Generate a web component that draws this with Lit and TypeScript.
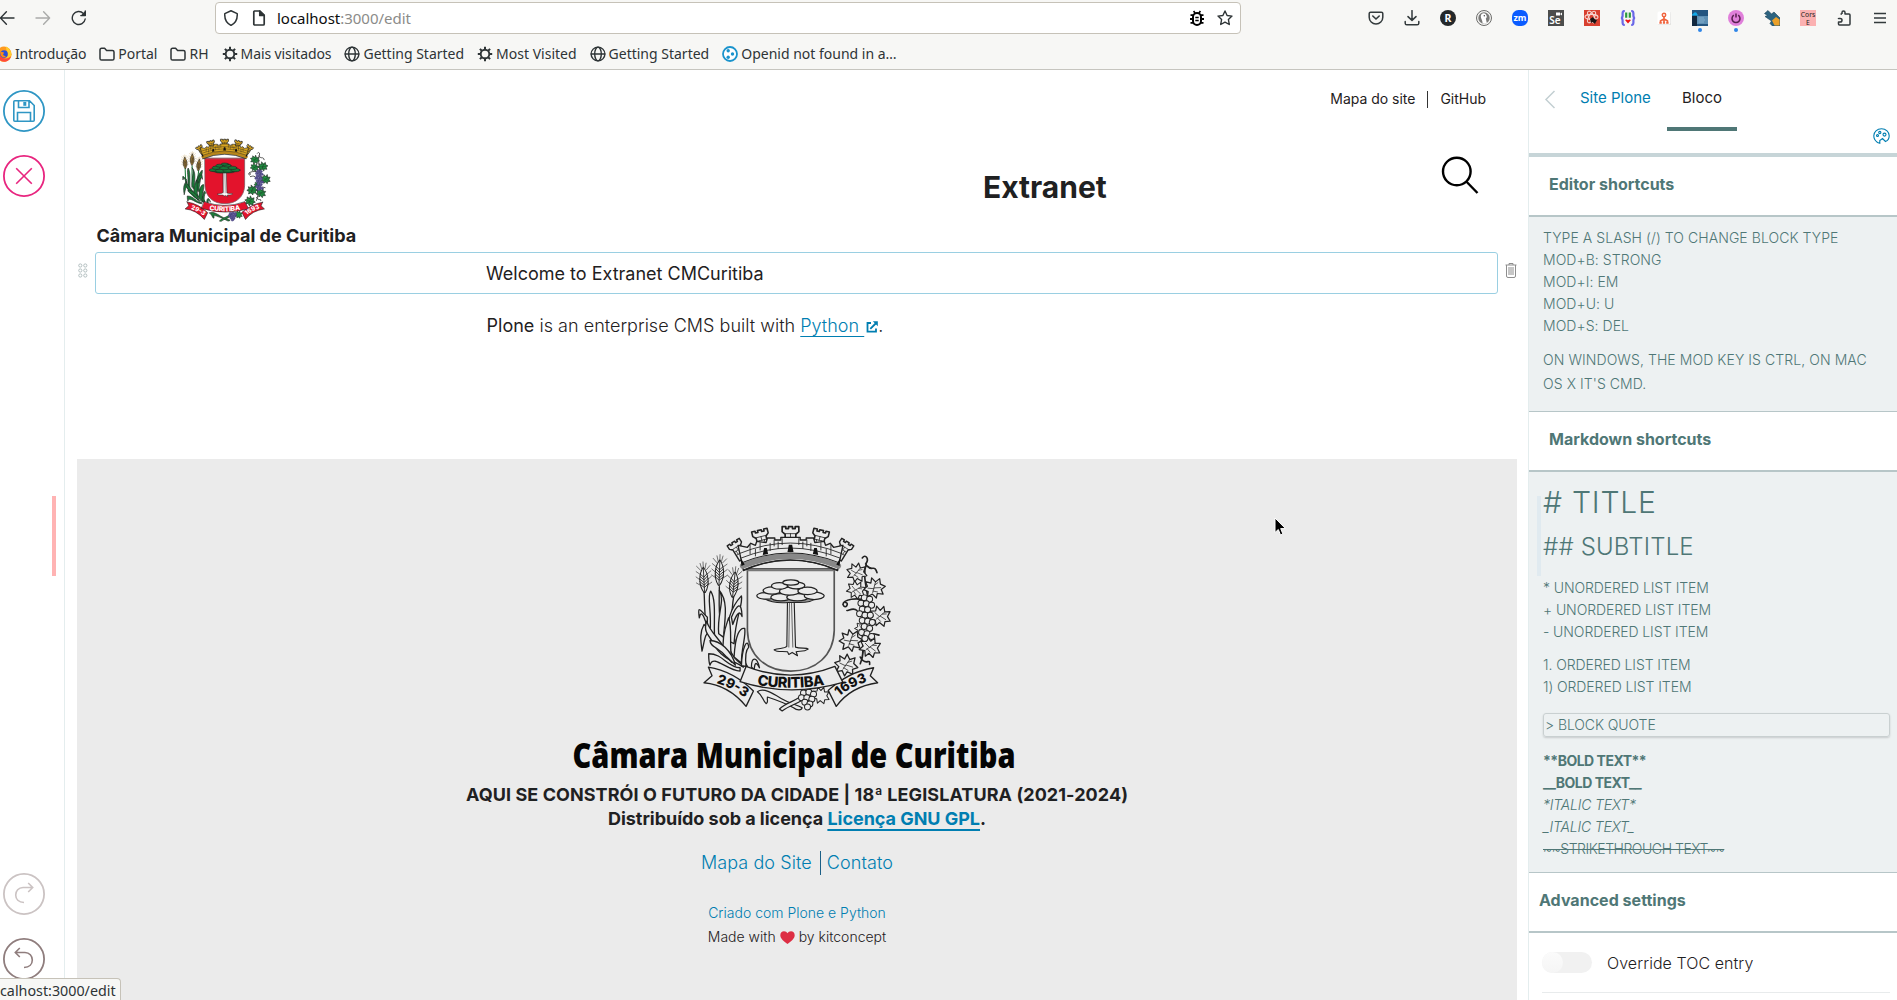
import { LitElement, html, svg, css, TemplateResult } from "lit";
import { customElement, property } from "lit/decorators.js";

type Pt = [number, number];

/* ---------- Coat of arms ---------- */

const CROWN_TOWERS: [number, number, number, number][] = [
  [228, 138, -32, 0.85],
  [302, 106, -14, 0.95],
  [391, 97, 0, 1],
  [480, 106, 14, 0.95],
  [554, 138, 32, 0.85],
];
const LEAVES: [number, number, number, number][] = [
  [590, 216, 30, 10], [642, 262, 32, -15], [588, 268, 28, 30], [660, 347, 32, 20],
  [572, 420, 34, -10], [630, 440, 32, 25], [558, 494, 34, 5], [606, 385, 22, 40],
];
const GRAPES: Pt[] = [
  [612, 292], [628, 296], [602, 308], [618, 310], [634, 314], [606, 326], [622, 328], [598, 340],
  [614, 344], [630, 344], [606, 360], [622, 362], [636, 366], [612, 378], [628, 384], [604, 396],
  [620, 400], [634, 408], [614, 414],
];
const LOW_GRAPES: Pt[] = [
  [430, 578], [446, 576], [460, 582], [424, 592], [440, 592], [455, 597], [434, 606], [449, 611], [442, 620],
];
const STALKS = [
  "M132 270C136 340 130 380 160 430S220 480 250 500",
  "M178 258C176 330 176 380 200 430S230 480 252 498",
  "M222 280C212 340 214 400 232 440S250 480 262 498",
];
const BLADES = [
  "M142 350C120 330 112 310 118 352C124 320 136 360 142 380Z",
  "M150 400C156 330 140 290 152 272C170 300 160 360 164 420Z",
  "M176 400C170 340 196 300 178 270C204 300 196 350 190 410Z",
  "M132 372C116 400 124 430 126 452C134 420 134 400 150 390Z",
  "M204 420C196 370 212 320 244 286C250 310 226 350 222 430Z",
  "M214 350C232 310 244 300 246 348C238 322 226 350 218 372Z",
  "M170 440C140 400 130 390 140 362C150 400 190 420 206 470Z",
  "M222 470C226 400 240 380 254 384C258 410 244 440 244 488Z",
  "M190 460C184 400 200 370 206 352C218 390 206 430 216 486Z",
  "M244 496C246 440 262 410 266 440C256 450 256 480 258 498Z",
  "M240 502C200 500 190 460 146 460C146 480 148 490 150 494C160 460 200 510 240 512Z",
  "M274 500C274 470 290 466 298 502C286 480 284 490 282 508Z",
  "M200 470C176 440 150 440 150 420C180 420 214 450 226 494Z",
];
const CANOPY: [number, number, number, number][] = [
  [318, 286, 28, 10], [362, 290, 30, 11], [412, 290, 32, 11], [462, 286, 30, 11],
  [336, 270, 27, 11], [388, 272, 30, 12], [442, 271, 29, 11], [358, 256, 24, 10],
  [408, 255, 26, 10], [392, 246, 24, 8],
];
const LEAF = "M0 -30L8 -16L22 -22L20 -6L32 4L18 10L20 24L4 18L-2 30L-10 16L-26 20L-20 6L-32 -4L-18 -10L-20 -24L-6 -16Z";

function crest(color: boolean, ids: string) {
  const paper = color ? "#ffffff" : "#ebebeb";
  const ink = "#222222";
  const c = {
    crown: color ? "#d9a520" : paper,
    red: color ? "#e3132c" : paper,
    leaf: color ? "#1e9140" : paper,
    blade: color ? "#1c7a3a" : paper,
    wheat: color ? "#b98d3c" : paper,
    grape: color ? "#5f5897" : paper,
    text: color ? "#ffffff" : "#111111",
  };
  const grape = ([x, y]: Pt) => svg`<circle cx=${x} cy=${y} r="9" fill=${c.grape} stroke=${color ? "#443d78" : ink} stroke-width="3"/>`;
  const ear = (x: number, y: number, lean: number) => svg`<g transform="translate(${x} ${y}) rotate(${lean})">
    <path d="M-9 -34L-20 -46M-9 -20L-22 -30M-11 -4L-23 -14M-11 12L-23 4M9 -34L20 -46M9 -20L22 -30M11 -4L23 -14M11 12L23 4M0 -40V-58M-5 -38L-9 -54M5 -38L9 -54" fill="none" stroke=${color ? c.wheat : ink} stroke-width="1.8"/>
    <path d="M0 -42C14 -24 18 10 2 34H-2C-18 10 -14 -24 0 -42Z" fill=${c.wheat} stroke=${ink} stroke-width="3"/>
    <path d="M-10 -22L0 -12L10 -22M-13 -8L0 4L13 -8M-13 8L0 19L13 8M0 -40V34M-11 -15L0 -4L11 -15M-13 0L0 12L13 0" fill="none" stroke=${ink} stroke-width="2.6"/>
  </g>`;
  const banner = color ? "#e3132c" : paper;
  return svg`<g stroke-linejoin="round" stroke-linecap="round">
    ${STALKS.map((d) => svg`<path d=${d} fill="none" stroke=${color ? c.blade : ink} stroke-width=${color ? 7 : 4}/>`)}
    ${BLADES.map((d) => svg`<path d=${d} fill=${c.blade} stroke=${ink} stroke-width="4"/>`)}
    ${ear(132, 242, -3)}${ear(178, 220, 2)}${ear(221, 256, 6)}
    <path d="M618 190C600 240 640 300 616 350S622 440 600 490M606 172C616 158 628 176 616 190M620 196C636 214 642 190 650 216M618 300C590 290 550 296 548 312C556 330 568 306 556 306M590 330C580 320 566 330 560 330M640 400L656 404M600 470C616 500 630 470 628 492" fill="none" stroke=${ink} stroke-width="5"/>
    ${LEAVES.map(([x, y, s, r]) => svg`<g transform="translate(${x} ${y}) rotate(${r}) scale(${s / 31})">
      <path d=${LEAF} fill=${c.leaf} stroke=${ink} stroke-width="3.6"/>
      <path d="M-8 12L8 -16M0 0L18 4M-2 2L-18 -4M4 -8L14 -12M-6 8L6 14" fill="none" stroke=${ink} stroke-width="2"/></g>`)}
    ${GRAPES.map(grape)}
    <path d="M292 574C310 560 340 580 366 596S410 612 426 622C424 632 410 630 400 622C370 606 340 596 322 590C320 600 326 606 318 610C306 598 310 588 292 574Z" fill=${c.blade} stroke=${ink} stroke-width="3.6"/>
    <path d="M358 626C380 604 410 604 430 580L440 588C420 610 392 612 366 632Z" fill=${c.leaf} stroke=${ink} stroke-width="3.6"/>
    <g transform="translate(482 585) rotate(20) scale(.85)"><path d=${LEAF} fill=${c.leaf} stroke=${ink} stroke-width="3.6"/></g>
    ${LOW_GRAPES.map(grape)}
    <path d="M262 205H522V390C520 466 466 512 392 512S264 466 262 390Z" fill=${c.red} stroke=${color ? "#7a5a60" : "#555"} stroke-width="5"/>
    <path d="M262 210H522" stroke=${color ? "#888" : "#777"} stroke-width="4"/>
    <path d="M382 300H402L406 440C420 446 440 440 444 446C430 456 416 450 408 454L412 466L396 456L386 462L382 454C366 452 350 456 342 448C356 442 372 446 380 438Z" fill=${paper} stroke=${ink} stroke-width="3.4"/>
    <path d="M388 304L386 440M394 304L398 440" stroke=${ink} stroke-width="2"/>
    <path d="M312 294Q340 310 384 306H410Q450 308 470 292Z" fill=${color ? "#0e5d2a" : "#999"} stroke=${ink} stroke-width="3"/>
    ${CANOPY.map(([x, y, rx, ry]) => svg`<ellipse cx=${x} cy=${y} rx=${rx} ry=${ry} fill=${color ? "#167a38" : paper} stroke=${ink} stroke-width="3.8"/>`)}
    ${CROWN_TOWERS.map(([x, y, r, s]) => svg`<g transform="translate(${x} ${y}) rotate(${r}) scale(${s})">
      <path d="M-25 -19H-14V-13H-6V-19H6V-13H14V-19H25V-4L16 4V50H-16V4L-25 -4Z" fill=${c.crown} stroke=${ink} stroke-width="5"/>
      <path d="M-18 2H18M-15 14H15M-15 27H15M0 2V14M-8 14V27M8 14V27" stroke=${ink} stroke-width="2.4"/></g>`)}
    <path d="M234 134L262 140L272 128L286 134L290 122L318 126L322 112H344V118H362V110H420V118H438V112H460L464 126L492 122L496 134L510 128L520 140L548 134L532 210Q390 146 250 210Z" fill=${c.crown} stroke=${ink} stroke-width="4"/>
    <path d="M240 158Q390 96 542 158M244 172Q390 112 538 172M270 134V160M300 126V148M342 118V136M366 114V132M416 114V132M440 118V136M482 126V148M512 134V160M286 146V166M330 128V150M354 124V144M428 124V144M452 128V150M498 146V166" fill="none" stroke=${ink} stroke-width="2.6"/>
    <path d="M248 196Q390 138 534 196" fill="none" stroke=${color ? "#b8861a" : "#888"} stroke-width="17"/>
    <path d="M246 186Q390 128 536 186M250 208Q390 150 532 208" fill="none" stroke=${ink} stroke-width="3"/>
    <path d="M308 163L312 142H320L324 160ZM382 154L386 132H396L400 154ZM458 160L462 142H470L474 163ZM244 196L242 172L254 192ZM538 196L540 172L528 192Z" fill="#111"/>
    <path d="M145 500L156 526L132 547Q206 554 258 618L280 572Q220 512 145 500Z" fill=${banner} stroke=${ink} stroke-width="4"/>
    <path d="M640 502L630 526L652 547Q572 558 528 618L504 570Q566 514 640 502Z" fill=${banner} stroke=${ink} stroke-width="4"/>
    <path d="M258 498Q390 550 524 498L548 546Q390 592 240 544Z" fill=${banner} stroke=${ink} stroke-width="4"/>
    <path id="${ids}-mid" d="M268 549Q390 575 516 549" fill="none"/>
    <path id="${ids}-left" d="M160 546Q208 556 262 598" fill="none"/>
    <path id="${ids}-right" d="M530 594Q568 558 634 540" fill="none"/>
    <g font-family="Inter, sans-serif" font-weight="800" fill=${c.text}>
      <text font-size="44" text-anchor="middle"><textPath href="#${ids}-mid" startOffset="50%" textLength="204">CURITIBA</textPath></text>
      <text font-size="40" text-anchor="middle"><textPath href="#${ids}-left" startOffset="50%">29-3</textPath></text>
      <text font-size="40" text-anchor="middle"><textPath href="#${ids}-right" startOffset="48%">1693</textPath></text>
    </g>
  </g>`;
}

/* ---------- Icons ---------- */

const stroke16 = (body: TemplateResult, cls = "i16", w = 1.4) =>
  html`<svg class=${cls} viewBox="0 0 16 16" fill="none" stroke="currentColor" stroke-width=${w} stroke-linecap="round" stroke-linejoin="round">${body}</svg>`;

const icons = {
  back: stroke16(svg`<path d="M15 8H1.6M7.4 1.8L1.4 8L7.4 14.2"/>`),
  forward: stroke16(svg`<path d="M1 8H14.4M8.6 1.8L14.6 8L8.6 14.2"/>`),
  reload: stroke16(svg`<path d="M14.200 9A6.500 6.500 0 1 1 12.400 3.400L14 5M14.300 1V5.600H9.800"/><path d="M14.200 2V5.400H10.800Z" fill="currentColor"/>`),
  shield: stroke16(svg`<path d="M8 .8L14.2 3.6C14.6 8.600 12.800 13 8 15.400C3.200 13 1.400 8.600 1.800 3.600Z"/>`, "i16", 1.5),
  doc: stroke16(svg`<path d="M3.400 1H8.800L13.200 5.400V14Q13.200 15 12.200 15H3.800Q2.800 15 2.800 14V2Q2.800 1 3.800 1Z"/><path d="M8.800 1V5.400H13.200Z" fill="currentColor"/>`, "i16", 1.7),
  bug: html`<svg class="i16" viewBox="0 0 16 16" fill="none" stroke="#000"><path d="M4.600 1L6 3M11.400 1L10 3" stroke-width="1.600"/><rect x="4" y="3" width="8" height="12" rx="4" stroke-width="2"/><path d="M1.500 5.200H4.500M1 9H4.500M1.500 12.800H4.500M11.500 5.200H14.500M11.500 9H15M11.500 12.800H14.500" stroke-width="1.800"/><path d="M6.300 7.500H9.700M6.300 10.500H9.700" stroke-width="1.500"/></svg>`,
  star: stroke16(svg`<path d="M8 1L10.100 5.500L15 6.100L11.400 9.500L12.300 14.500L8 12.100L3.700 14.500L4.600 9.500L1 6.100L5.900 5.500Z"/>`, "i16", 1.4),
  folder: stroke16(svg`<path d="M1 4Q1 2.300 2.600 2.300H5.600L7.600 4.500H13.400Q15 4.500 15 6V12.400Q15 14 13.400 14H2.600Q1 14 1 12.400Z"/>`, "i16", 1.5),
  gear: html`<svg class="i16" viewBox="0 0 16 16" fill="none" stroke="currentColor"><circle cx="8" cy="8" r="4.300" stroke-width="1.900"/><path d="M8 .8V3.500M8 12.500V15.200M.8 8H3.500M12.500 8H15.200M2.900 2.900L4.800 4.800M11.200 11.200L13.100 13.100M13.100 2.900L11.200 4.800M4.800 11.200L2.900 13.100" stroke-width="2"/></svg>`,
  globe: stroke16(svg`<circle cx="8" cy="8" r="6.900"/><ellipse cx="8" cy="8" rx="3.300" ry="6.900"/><path d="M1.200 8H14.800"/>`, "i16", 1.4),
  firefox: html`<svg class="i16" viewBox="0 0 16 16"><circle cx="8" cy="8.200" r="7.600" fill="#ff9a1f"/><path d="M10 .5C15 3 17 9 13.600 13A7.600 7.600 0 0 1 1 11C5 14 11 13.500 12 9C12.300 6 10 5 10 .5Z" fill="#ffcf2e"/><path d="M1 5C0 10 3 15.800 8 15.800C12 15.800 14.500 13 15 10C12 14 5 13 4 8Z" fill="#ff4a3d"/><circle cx="8" cy="8" r="3.800" fill="#2b4fd8"/><path d="M4.500 5.500L8 6.500L7 9L10 10.600C7 12.500 3.600 10.500 4.500 5.500Z" fill="#ff8a16"/></svg>`,
  plone: html`<svg class="i16" viewBox="0 0 16 16"><circle cx="8" cy="8" r="7" fill="#fff" stroke="#1a93cc" stroke-width="1.800"/><circle cx="6.200" cy="4.800" r="1.700" fill="#1a93cc"/><circle cx="10.500" cy="8" r="1.700" fill="#1a93cc"/><circle cx="6.200" cy="11.200" r="1.700" fill="#1a93cc"/></svg>`,
};

const extensions: { name: string; dot?: boolean; art: TemplateResult }[] = [
  { name: "pocket", art: svg`<path d="M2.600 2.200H13.400Q14.800 2.200 14.800 3.600V7.200A6.800 6.800 0 0 1 1.200 7.200V3.600Q1.200 2.200 2.600 2.200Z" fill="none" stroke="#333a3c" stroke-width="1.500"/><path d="M4.800 6L8 9L11.200 6" fill="none" stroke="#333a3c" stroke-width="1.600" stroke-linecap="round"/>` },
  { name: "downloads", art: svg`<path d="M8 .6V10.200M4 6.600L8 10.400L12 6.600M1.200 11.600V13.200Q1.200 14.800 2.800 14.800H13.200Q14.800 14.800 14.800 13.200V11.600" fill="none" stroke="#333a3c" stroke-width="1.500" stroke-linecap="round" stroke-linejoin="round"/>` },
  { name: "r", art: svg`<circle cx="8" cy="8" r="8" fill="#24282a"/><text x="8" y="11.800" font-size="10.500" font-weight="700" text-anchor="middle" fill="#fff">R</text>` },
  { name: "duck", art: svg`<circle cx="8" cy="8" r="7.500" fill="#f3f3f1" stroke="#6d6d6b" stroke-width="1"/><circle cx="8" cy="8" r="5.700" fill="#7b7b79"/><path d="M4.800 6.500C4.800 3 8.500 2.600 9.800 4.300C10.800 6 11.500 7 9.800 8.600L10.800 13C9 14 7.500 13.600 6.600 13.200C6.600 10.500 4.800 8.500 4.800 6.500Z" fill="#fff"/><circle cx="8.300" cy="5.800" r=".7" fill="#444"/>` },
  { name: "zoom", art: svg`<rect width="16" height="16" rx="6.500" fill="#0b5cff"/><text x="8" y="10.800" font-size="8.800" font-weight="700" text-anchor="middle" fill="#fff">zm</text>` },
  { name: "selenium", art: svg`<rect width="16" height="16" fill="#4c4d4c"/><text x="1.200" y="14.300" font-size="10" font-weight="600" fill="#fff">Se</text><path d="M8 2.500H12V5.500H8ZM12 4L14 2.500V5.500Z" fill="#fff"/>` },
  { name: "bee", art: svg`<rect width="16" height="16" fill="#d8402f"/><g fill="none" stroke="#f6d5cf" stroke-width="1.100"><ellipse cx="7.500" cy="7" rx="6.500" ry="2.600"/><ellipse cx="7.500" cy="7" rx="6.500" ry="2.600" transform="rotate(60 7.500 7)"/><ellipse cx="7.500" cy="7" rx="6.500" ry="2.600" transform="rotate(120 7.500 7)"/></g><path d="M6 9L9 7L10.500 9L13 10L11 14L8.500 12L7 13Z" fill="#1b1414"/>` },
  { name: "json", art: svg`<path d="M4.800 1Q2.600 1 2.600 3V5.500Q2.600 7.800 1 8Q2.600 8.200 2.600 10.500V13Q2.600 15 4.800 15M11.200 1Q13.400 1 13.400 3V5.500Q13.400 7.800 15 8Q13.400 8.200 13.400 10.500V13Q13.400 15 11.200 15" fill="none" stroke="#6a68e8" stroke-width="2.200"/><path d="M6.200 2.500V7.800M9.800 2.500V7.800" stroke="#2f9a3d" stroke-width="2.200"/><path d="M8 13.600L5 10Q6.500 8.800 8 10.200Q9.500 8.800 11 10Z" fill="#ee1414"/>` },
  { name: "tree", art: svg`<rect x="2" y="2" width="13" height="13" rx="1.500" fill="#d5d5d3"/><rect x="1.500" y="1.500" width="13" height="13" rx="1.500" fill="#fff"/><circle cx="8" cy="5" r="1.700" fill="none" stroke="#f0653e" stroke-width="1.500"/><path d="M8 6.500V8.800M4.500 12.500V11L8 8.800L11.500 11V12.500M8 8.800V12.500M3.400 12.800H5.800M6.900 12.800H9.100M10.200 12.800H12.600" fill="none" stroke="#f0653e" stroke-width="1.700"/>` },
  { name: "video", dot: true, art: svg`<rect width="16" height="16" fill="#245580"/><rect x="0" y="6" width="5" height="10" fill="#12283f"/><rect x="5" y="6" width="11" height="8" fill="#5d8fb4"/><path d="M6.500 8H12M6.500 10H13M6.500 12H12" stroke="#8fb8d4" stroke-width=".8"/><path d="M0 5.500C0 3.500 2 3.500 2.500 2.500C4 2 5 3 5 4L6.500 5.500Z" fill="#11a9e8"/>` },
  { name: "power", dot: true, art: svg`<circle cx="8" cy="8" r="8" fill="#e07fda"/><path d="M5.800 5.200A4 4 0 1 0 10.200 5.200M8 3.600V7.500" fill="none" stroke="#57204f" stroke-width="1.500"/>` },
  { name: "arrow", art: svg`<path d="M.5 3.500L4 .5L7.500 4L10 2L16 8V16H8.500L6 13.500L7.500 11L1 6.500L3.500 5.500Z" fill="#2d6480" stroke="#1d4357" stroke-width=".6"/><path d="M8 10.500L12 7L15.600 9.500V15.600H10.500Z" fill="#eba12a"/>` },
  { name: "cors", art: svg`<rect width="16" height="16" fill="#fbb1b1"/><text x="8" y="7" font-size="6.800" text-anchor="middle" fill="#222">Cors</text><text x="8" y="14.800" font-size="6.800" text-anchor="middle" fill="#222">E</text>` },
  { name: "puzzle", art: svg`<path d="M6 4V2.600Q6 1 7.500 1T9 2.600V4H13Q14 4 14 5V14Q14 15 13 15H3.500Q2.500 15 2.500 14V12H4Q6 12 6 10.200T4 8.500H2.500V8M6 4H4.500" fill="none" stroke="#333a3c" stroke-width="1.500" stroke-linejoin="round"/>` },
  { name: "menu", art: svg`<path d="M2 3.500H14M2 8H14M2 12.500H14" stroke="#333a3c" stroke-width="1.400"/>` },
];

const bookmarks: { icon: keyof typeof icons; label: string; fit: string }[] = [
  { icon: "firefox", label: "Introdução", fit: "f-a" },
  { icon: "folder", label: "Portal", fit: "" },
  { icon: "folder", label: "RH", fit: "" },
  { icon: "gear", label: "Mais visitados", fit: "f-b" },
  { icon: "globe", label: "Getting Started", fit: "" },
  { icon: "gear", label: "Most Visited", fit: "" },
  { icon: "globe", label: "Getting Started", fit: "" },
  { icon: "plone", label: "Openid not found in a…", fit: "" },
];

/* ---------- Browser chrome ---------- */

@customElement("browser-chrome")
class BrowserChrome extends LitElement {
  static styles = css`
    :host { display: block; height: 70px; box-sizing: border-box; background: #f7f7f5; border-bottom: 1px solid #c6c5bf; color: #2e3436; font-family: "Noto Sans", sans-serif; overflow: hidden; }
    svg { display: block; flex: none; }
    .i16 { width: 16px; height: 16px; }
    .bar { display: flex; align-items: center; height: 36px; }
    .nav { display: flex; gap: 20px; width: 216px; margin-left: -1px; flex: none; }
    .nav .dim { color: #aaaba9; }
    .url { display: flex; align-items: center; width: 1026px; height: 32px; box-sizing: border-box; border: 1px solid #c6c2b8; border-radius: 4px; background: #fff; padding: 0 7px; }
    .url .host { font-size: 15px; line-height: 24px; flex: 1; padding-left: 10px; color: #8b8b89; letter-spacing: -.02px; }
    .url b { font-weight: 400; color: #0c0c0d; }
    .url .doc { margin-left: 12px; }
    .url .star { margin-left: 12px; }
    .ext { display: flex; gap: 20px; padding-left: 127px; }
    .tool { position: relative; }
    .dot { position: absolute; left: 6px; top: 18px; width: 4px; height: 4px; border-radius: 50%; background: #2f86e8; }
    .marks { display: flex; align-items: center; gap: 13px; height: 35px; margin-left: -4px; }
    .mark { display: flex; align-items: center; gap: 3px; font-size: 14px; line-height: 20px; white-space: nowrap; }
    .f-a { letter-spacing: -.15px; }
    .f-b { letter-spacing: -.1px; }
  `;
  render() {
    return html`
      <div class="bar">
        <div class="nav">${icons.back}<span class="dim">${icons.forward}</span>${icons.reload}</div>
        <div class="url">${icons.shield}<span class="doc">${icons.doc}</span>
          <span class="host"><b>localhost</b>:3000/edit</span>${icons.bug}<span class="star">${icons.star}</span></div>
        <div class="ext">${extensions.map((e) => html`<span class="tool"><svg class="i16" viewBox="0 0 16 16">${e.art}</svg>${e.dot ? html`<span class="dot"></span>` : ""}</span>`)}</div>
      </div>
      <div class="marks">${bookmarks.map((b) => html`<span class="mark">${icons[b.icon]}<span class=${b.fit}>${b.label}</span></span>`)}</div>`;
  }
}

/* ---------- Left toolbar ---------- */

@customElement("edit-toolbar")
class EditToolbar extends LitElement {
  static styles = css`
    :host { display: flex; width: 65px; box-sizing: border-box; border-right: 1px solid #e4edee; background: #fff; position: relative; }
    .col { display: flex; flex-direction: column; gap: 23px; padding-top: 20px; padding-left: 3px; height: 930px; box-sizing: border-box; }
    .btn { width: 42px; height: 42px; display: block; flex: none; }
    .spacer { flex: 1; }
    .handle { position: absolute; left: 52px; top: 426px; width: 4px; height: 80px; background: #ffb3b3; }
    .low { display: flex; flex-direction: column; gap: 23px; height: 127px; flex: none; }
  `;
  private button(color: string, body: TemplateResult) {
    return html`<svg class="btn" viewBox="0 0 42 42" fill="none" stroke=${color} stroke-width="1.600"><circle cx="21" cy="21" r="20.100" stroke-width="1.800"/>${body}</svg>`;
  }
  render() {
    return html`<div class="col">
      ${this.button("#2f96c4", svg`<path d="M10.800 11.800Q10.800 10.800 11.800 10.800H26.500L31.200 15.500V30.200Q31.200 31.200 30.200 31.200H11.800Q10.800 31.200 10.800 30.200ZM14.500 31V22.500H27.500V31M15.500 11V17.500H26V11"/><path d="M20.300 12H23.300V15.800H20.300Z" fill="#2f96c4" stroke="none"/>`)}
      ${this.button("#e8257f", svg`<path d="M13.200 13.200L28.800 28.800M28.800 13.200L13.200 28.800"/>`)}
      <div class="spacer"></div>
      <div class="low">
        ${this.button("#cbc3c3", svg`<path d="M21 29.500C15.500 29.500 12.700 26 12.700 22S15.500 14.500 20 14.500H29.500M25.200 10L29.700 14.500L25.200 19"/>`)}
        ${this.button("#8f7d7d", svg`<path d="M21 29.500C26.500 29.500 29.300 26 29.300 22S26.500 14.500 22 14.500H12.500M16.800 10L12.300 14.500L16.800 19"/>`)}
      </div>
    </div><div class="handle"></div>`;
  }
}

/* ---------- Page content ---------- */

@customElement("page-content")
class PageContent extends LitElement {
  static styles = css`
    :host { display: flex; flex-direction: column; width: 1463px; color: #1f2122; font-family: Inter, "Liberation Sans", sans-serif; background: #fff; overflow: hidden; }
    svg { display: block; flex: none; }
    .anon { display: flex; flex: none; justify-content: flex-end; align-items: center; height: 20px; margin-top: 19px; padding-right: 42px; font-size: 14px; line-height: 20px; letter-spacing: -.02px; }
    .anon i { width: 1px; height: 17px; background: #333; margin: 0 12px 0 12px; }
    .head { display: flex; flex: none; align-items: flex-start; height: 143px; padding-left: 31.5px; }
    .brand { width: 260px; padding-top: 29px; }
    .arms { width: 90px; height: 84px; margin-left: 84px; }
    .name { font-weight: 700; font-size: 18px; line-height: 26px; padding-top: 1px; white-space: nowrap; }
    .title { margin: 58px 0 0 626.500px; font-weight: 700; font-size: 30px; line-height: 40px; width: 124px; }
    .search { width: 40px; height: 40px; margin: 45px 0 0 333px; }
    .row { display: flex; flex: none; align-items: flex-start; padding-left: 13px; }
    .drag { width: 10px; height: 15px; margin: 11px 7px 0 0; }
    .block { width: 1403px; height: 42px; box-sizing: border-box; border: 1px solid #9acfe2; border-radius: 3px; padding: 0 0 0 390px; font-size: 18px; line-height: 42px; }
    .trash { width: 12px; height: 16px; margin: 10px 0 0 7px; }
    .text { flex: none; padding: 20px 0 0 421.500px; font-size: 18px; line-height: 24px; height: 145px; font-weight: 300; letter-spacing: .02px; }
    .text b { font-weight: 400; }
    .link { color: #007eb1; text-decoration: underline; text-decoration-thickness: 1px; text-underline-offset: 4px; }
    .out { display: inline-block; width: 12px; height: 12px; margin-left: 2px; vertical-align: -1px; }
    .footer { flex: none; margin: 0 11px 0 12px; width: 1440px; height: 560px; background: #ebebeb; display: flex; flex-direction: column; align-items: center; white-space: nowrap; }
    .crest { width: 197px; height: 188px; margin: 65px 7px 0 0; }
    .mark { width: 460px; height: 44px; margin: 23px 7px 0 0; overflow: visible; }
    .strong { font-weight: 700; font-size: 18px; line-height: 24px; height: 24px; letter-spacing: .07px; margin-top: 4px; }
    .strong.two { margin-top: 0; letter-spacing: -.03px; }
    .strong .link { text-decoration-thickness: 2px; }
    .links { display: flex; align-items: center; margin-top: 19px; height: 25px; color: #007eb1; font-size: 18px; line-height: 25px; font-weight: 300; letter-spacing: .08px; }
    .links i { width: 1px; height: 24px; background: #1b5f86; margin: 0 6px 0 8px; }
    .small { font-size: 14px; line-height: 24px; font-weight: 300; color: #1f2122; display: flex; align-items: center; }
    .small.first { color: #007eb1; margin-top: 26px; }
    .heart { width: 15px; height: 13px; margin: 0 4px; }
  `;
  render() {
    return html`
      <div class="anon"><span>Mapa do site</span><i></i><span>GitHub</span></div>
      <div class="head">
        <div class="brand">
          <svg class="arms" viewBox="105 70 590 565" preserveAspectRatio="none">${crest(true, "arms")}</svg>
          <div class="name">Câmara Municipal de Curitiba</div>
        </div>
        <div class="title">Extranet</div>
        <svg class="search" viewBox="0 0 40 40" fill="none" stroke="#000" stroke-width="2.400"><circle cx="16.800" cy="17.500" r="13.800"/><path d="M26.300 27.500L37.500 39"/></svg>
      </div>
      <div class="row">
        <svg class="drag" viewBox="0 0 10 15" fill="none" stroke="#b3bfc0" stroke-width="1">${[2.5, 7.5, 12.5].map((y) => [2.3, 7.3].map((x) => svg`<circle cx=${x} cy=${y} r="1.600"/>`))}</svg>
        <div class="block">Welcome to Extranet CMCuritiba</div>
        <svg class="trash" viewBox="0 0 12 16" fill="none" stroke="#8e8e8e" stroke-width="1"><path d="M.5 3H11.500M4 3V1.500H8V3M1.500 3V14Q1.500 15.500 3 15.500H9Q10.500 15.500 10.500 14V3M4 5V13M6 5V13M8 5V13"/></svg>
      </div>
      <div class="text"><b>Plone</b> is an enterprise CMS built with <span class="link">Python <svg class="out" viewBox="0 0 12 12" fill="none" stroke="#007eb1" stroke-width="1.800"><path d="M5 2H1.500V10.700H10V7.500M4.300 7.900L10.200 2"/><path d="M6.800 .3H11.800V5.300Z" fill="#007eb1" stroke="none"/></svg></span>.</div>
      <div class="footer">
        <svg class="crest" viewBox="105 70 590 565" preserveAspectRatio="none">${crest(false, "crest")}</svg>
        <svg class="mark" viewBox="0 0 460 44"><text x="8.500" y="33" font-family="'Open Sans', sans-serif" font-weight="800" font-size="34.500" textLength="443" lengthAdjust="spacingAndGlyphs" fill="#050505">Câmara Municipal de Curitiba</text></svg>
        <div class="strong">AQUI SE CONSTRÓI O FUTURO DA CIDADE | 18ª LEGISLATURA (2021-2024)</div>
        <div class="strong two">Distribuído sob a licença <span class="link">Licença GNU GPL</span>.</div>
        <div class="links"><span>Mapa do Site</span><i></i><span>Contato</span></div>
        <div class="small first">Criado com Plone e Python</div>
        <div class="small"><span>Made with</span><svg class="heart" viewBox="0 0 15 13"><path d="M7.500 13C4 10.500 .3 7.500 .3 4.200C.3 1.800 2 .3 4 .3C5.600 .3 6.800 1 7.500 2.300C8.200 1 9.400 .3 11 .3C13 .3 14.700 1.800 14.700 4.200C14.700 7.500 11 10.500 7.500 13Z" fill="#dd2e44"/></svg><span>by kitconcept</span></div>
      </div>`;
  }
}

/* ---------- Right sidebar ---------- */

@customElement("side-panel")
class SidePanel extends LitElement {
  static styles = css`
    :host { display: block; flex: 1; box-sizing: border-box; border-left: 1px solid #e4edee; font-family: Inter, "Open Sans", sans-serif; color: #4f7776; background: #fff; position: relative; white-space: nowrap; }
    svg { display: block; }
    .tabs { display: flex; height: 87px; box-sizing: border-box; border-bottom: 4px solid #c7d5d8; }
    .chev { width: 12px; height: 19px; margin: 20px 0 0 15px; }
    .tab { height: 61px; box-sizing: border-box; padding: 16px 15px 0; font-size: 15px; line-height: 24px; color: #007eb1; }
    .tab.one { margin-left: 9px; width: 102px; }
    .tab.on { color: #1f2122; border-bottom: 4px solid #4f7776; width: 70px; }
    .pal { width: 17px; height: 16px; margin: 58px 7px 0 auto; }
    .h { box-sizing: border-box; height: 60px; padding-left: 20px; border-bottom: 2px solid #b7c6c8; font-weight: 700; font-size: 16px; line-height: 54px; }
    .h.mid { border-top: 1px solid #b7c6c8; height: 61px; }
    .h.adv { padding-left: 10px; letter-spacing: .03px; }
    .box { background: #edf1f2; box-sizing: border-box; padding: 10px 7px 0 14px; font-size: 14px; font-weight: 300; line-height: 22px; letter-spacing: .06px; }
    .box.a { height: 194px; }
    .box.a p { line-height: 24px; margin: 11px 0 0; letter-spacing: .08px; }
    .box.b { height: 400px; padding-top: 0; letter-spacing: -.09px; }
    .t1 { font-size: 30px; line-height: 40px; padding-top: 10px; letter-spacing: .75px; }
    .t2 { font-size: 24px; line-height: 34px; padding-top: 8px; letter-spacing: .18px; }
    .list { padding-top: 13px; }
    .list.ord { padding-top: 11px; }
    .quote { height: 24px; box-sizing: border-box; margin: 15px 0 13px; border: 1px solid #c9d0d1; border-radius: 3px; box-shadow: 0 1px 2px rgba(34, 36, 38, .18); padding-left: 1px; line-height: 21px; }
    .bold { font-weight: 700; letter-spacing: -.5px; }
    .ital { font-style: italic; letter-spacing: -.2px; }
    .strike { text-decoration: line-through; letter-spacing: -.48px; }
    .toggle { display: flex; align-items: center; height: 59px; padding-bottom: 0; margin: 0 7px 0 13px; border-bottom: 1px solid #e8ebec; color: #1f2122; font-size: 16px; font-weight: 300; letter-spacing: .06px; gap: 15px; }
    .sw { width: 50px; height: 21px; border-radius: 11px; background: #f1f1f1; }
    .knob { display: block; width: 21px; height: 21px; border-radius: 50%; background: linear-gradient(#fbfbfb, #f5f5f5); }
    .grip { position: absolute; left: 8px; top: 426px; width: 4px; height: 80px; background: #e0eaf0; }
  `;
  render() {
    return html`
      <div class="tabs">
        <svg class="chev" viewBox="0 0 12 19" fill="none" stroke="#c3cfd2" stroke-width="1.500"><path d="M10.500 1L2 9.500L10.500 18"/></svg>
        <div class="tab one">Site Plone</div>
        <div class="tab on">Bloco</div>
        <svg class="pal" viewBox="0 0 17 16" fill="none" stroke="#007eb1" stroke-width="1.100"><path d="M4.500 14.500C1.800 12.500 .8 10.500 .8 7.800C.8 4 4 .8 8.500 .8S16.200 4 16.200 7.800C16.200 10.500 15.200 12.500 12.500 13.500L9.500 10.500L6.800 12.500V15.200Z"/><circle cx="4.500" cy="7.500" r="1"/><circle cx="6.800" cy="4.500" r="1.100"/><circle cx="11.500" cy="6.600" r="1.500"/></svg>
      </div>
      <div class="h">Editor shortcuts</div>
      <div class="box a">
        <div>TYPE A SLASH (/) TO CHANGE BLOCK TYPE</div><div>MOD+B: STRONG</div><div>MOD+I: EM</div><div>MOD+U: U</div><div>MOD+S: DEL</div>
        <p>ON WINDOWS, THE MOD KEY IS CTRL, ON MAC<br>OS X IT'S CMD.</p>
      </div>
      <div class="h mid">Markdown shortcuts</div>
      <div class="box b">
        <div class="t1"># TITLE</div>
        <div class="t2">## SUBTITLE</div>
        <div class="list"><div>* UNORDERED LIST ITEM</div><div>+ UNORDERED LIST ITEM</div><div>- UNORDERED LIST ITEM</div></div>
        <div class="list ord"><div>1. ORDERED LIST ITEM</div><div>1) ORDERED LIST ITEM</div></div>
        <div class="quote">&gt; BLOCK QUOTE</div>
        <div class="bold">**BOLD TEXT**</div>
        <div class="bold">__BOLD TEXT__</div>
        <div class="ital">*ITALIC TEXT*</div>
        <div class="ital">_ITALIC TEXT_</div>
        <div><span class="strike">~~STRIKETHROUGH TEXT~~</span></div>
      </div>
      <div class="h mid adv">Advanced settings</div>
      <div class="toggle"><span class="sw"><span class="knob"></span></span><span>Override TOC entry</span></div>
      <div class="grip"></div>`;
  }
}

@customElement("app-root")
class AppRoot extends LitElement {
  static styles = css`
    :host { display: block; width: 1897px; height: 1000px; overflow: hidden; position: relative; background: #fff; }
    .body { display: flex; height: 930px; overflow: hidden; }
    .status { position: absolute; left: 0; bottom: 0; height: 22px; width: 121px; box-sizing: border-box; background: #f7f7f5; border: 1px solid #c6c2b8; border-left: 0; border-bottom: 0; border-top-right-radius: 4px; font: 14.300px/23px "Noto Sans", sans-serif; color: #2e3436; white-space: nowrap; }
    .cursor { position: absolute; left: 1274px; top: 517px; width: 13px; height: 19px; }
  `;
  render() {
    return html`
      <browser-chrome></browser-chrome>
      <div class="body"><edit-toolbar></edit-toolbar><page-content></page-content><side-panel></side-panel></div>
      <div class="status">calhost:3000/edit</div>
      <svg class="cursor" viewBox="0 0 13 19"><path d="M1 1V15.500L4.300 12.500L6.500 18L8.900 17L6.700 11.600H11.500Z" fill="#000" stroke="#fff" stroke-width="1"/></svg>`;
  }
}
